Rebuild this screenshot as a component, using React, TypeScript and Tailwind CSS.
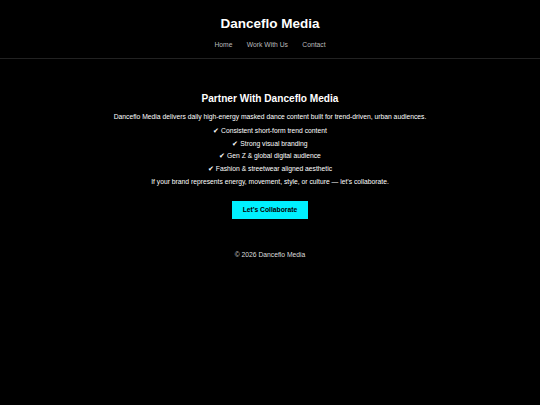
export default function App() {
  const points = [
    "Consistent short-form trend content",
    "Strong visual branding",
    "Gen Z & global digital audience",
    "Fashion & streetwear aligned aesthetic",
  ];

  return (
    <div
      className="min-h-screen bg-black text-white text-center"
      style={{ fontFamily: '"Liberation Sans", Arial, sans-serif' }}
    >
      {/* Header */}
      <header className="border-b border-[#222] pt-[15px] pb-[8px]">
        <h1 className="text-[13.5px] font-bold leading-[18px]">Danceflo Media</h1>
        <nav className="mt-[7px] flex justify-center gap-[14.4px] text-[6.75px] leading-[10px] text-[#bbb]">
          <a href="#">Home</a>
          <a href="#">Work With Us</a>
          <a href="#">Contact</a>
        </nav>
      </header>

      {/* Main */}
      <main className="pt-[34px]">
        <h2 className="text-[10.125px] font-bold leading-[12px]">Partner With Danceflo Media</h2>
        <p className="mt-[6px] text-[6.75px] leading-[12px]">
          Danceflo Media delivers daily high-energy masked dance content built for trend-driven, urban audiences.
        </p>
        <ul className="mt-[2px] text-[6.75px] leading-[12.5px]">
          {points.map((p) => (
            <li key={p}>✔ {p}</li>
          ))}
        </ul>
        <p className="mt-[1px] text-[6.75px] leading-[12px]">
          If your brand represents energy, movement, style, or culture — let’s collaborate.
        </p>
        <a
          href="#"
          className="mt-[13px] inline-flex h-[18px] w-[76px] items-center justify-center bg-[#00f0ff] text-[6.75px] font-bold text-black"
        >
          Let’s Collaborate
        </a>
      </main>

      {/* Footer */}
      <footer className="mt-[30px] text-[6.75px] leading-[12px] text-[#ddd]">© 2026 Danceflo Media</footer>
    </div>
  );
}
